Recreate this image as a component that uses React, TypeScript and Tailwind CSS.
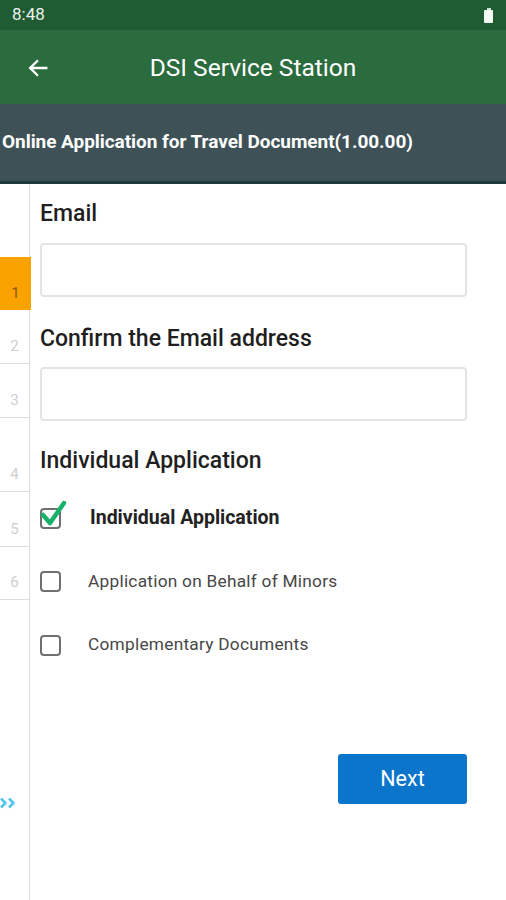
import React, { useState } from "react";

const steps = [
  { n: "1", h: "h-[53px]", active: true },
  { n: "2", h: "h-[54px]", active: false },
  { n: "3", h: "h-[54px]", active: false },
  { n: "4", h: "h-[74px]", active: false },
  { n: "5", h: "h-[55px]", active: false },
  { n: "6", h: "h-[53px]", active: false },
];

const Box = ({ checked }: { checked: boolean }) => (
  <div className="relative w-[21px] h-[21px] shrink-0">
    <div className="absolute inset-0 rounded-[4px] border-2 border-[#6f6f6f]" />
    {checked && (
      <svg
        className="absolute left-[1px] top-[-8px]"
        width="26"
        height="28"
        viewBox="0 0 26 28"
      >
        <path
          d="M2 15 L9 23 L23 3"
          fill="none"
          stroke="#17b26a"
          strokeWidth="4.5"
          strokeLinecap="round"
          strokeLinejoin="round"
        />
      </svg>
    )}
  </div>
);

const App = () => {
  const [email, setEmail] = useState("");
  const [confirm, setConfirm] = useState("");
  const [choice, setChoice] = useState(0);

  const options = [
    "Individual Application",
    "Application on Behalf of Minors",
    "Complementary Documents",
  ];

  return (
    <div className="w-[506px] h-[900px] flex flex-col bg-white overflow-hidden font-['Roboto',sans-serif]">
      {/* status bar */}
      <div className="h-[30px] bg-[#1f5c33] flex items-center justify-between pl-[12px] pr-[13px]">
        <span className="text-[17px] text-[#e9f1eb]">8:48</span>
        <div className="flex flex-col items-center">
          <div className="w-[4px] h-[2px] bg-[#cfe3d4]" />
          <div className="w-[9px] h-[13px] rounded-[1px] bg-[#f4fbf4]" />
        </div>
      </div>

      {/* app bar */}
      <div className="h-[74px] bg-[#2a6c3e] relative flex items-center justify-center pt-[2px]">
        <svg
          className="absolute left-[27px] top-[27px]"
          width="22"
          height="22"
          viewBox="0 0 24 24"
        >
          <path
            d="M21 12H4M11 4.5L3.5 12L11 19.5"
            fill="none"
            stroke="#ffffff"
            strokeWidth="2.6"
            strokeLinecap="square"
          />
        </svg>
        <span className="text-[24.5px] text-white">DSI Service Station</span>
      </div>

      {/* sub header */}
      <div className="h-[80px] bg-[#3d5157] border-b-[3px] border-[#1d3a3c] flex items-center pl-[2px]">
        <span className="text-[19px] font-bold text-white tracking-[-0.05px]">
          Online Application for Travel Document(1.00.00)
        </span>
      </div>

      <div className="flex-1 flex">
        {/* step sidebar */}
        <div className="w-[30px] border-r border-[#dcdcdc] flex flex-col shrink-0">
          <div className="h-[73px]" />
          {steps.map((s) => (
            <div
              key={s.n}
              className={
                s.active
                  ? `${s.h} bg-[#f9a200] w-[31px] flex items-end justify-center pb-[6px]`
                  : `${s.h} border-b border-[#dedede] flex items-end justify-center pb-[6px]`
              }
            >
              <span
                className={
                  s.active ? "text-[15px] text-[#8b5a10]" : "text-[15px] text-[#cfcfcf]"
                }
              >
                {s.n}
              </span>
            </div>
          ))}
          <div className="h-[210px] flex items-end pb-[1px]">
            <svg width="18" height="12" viewBox="0 0 18 12">
              <path
                d="M1 1.5 L5.5 6 L1 10.5 M9 1.5 L13.5 6 L9 10.5"
                fill="none"
                stroke="#52c3ef"
                strokeWidth="2.6"
                strokeLinejoin="round"
              />
            </svg>
          </div>
        </div>

        {/* form */}
        <div className="flex-1 pl-[10px] pr-[39px] pt-[16px] flex flex-col">
          <label className="text-[23px] font-medium text-[#1f1f1f] leading-[28px]">Email</label>
          <input
            value={email}
            onChange={(e) => setEmail(e.target.value)}
            className="mt-[15px] h-[54px] w-full rounded-[4px] border-2 border-[#e4e4e4] px-3 outline-none"
          />
          <label className="mt-[28px] text-[23px] font-medium text-[#1f1f1f] leading-[28px]">
            Confirm the Email address
          </label>
          <input
            value={confirm}
            onChange={(e) => setConfirm(e.target.value)}
            className="mt-[14px] h-[54px] w-full rounded-[4px] border-2 border-[#e4e4e4] px-3 outline-none"
          />
          <div className="mt-[26px] text-[23px] font-medium text-[#1f1f1f] leading-[28px]">
            Individual Application
          </div>

          <div className="mt-[32px] flex flex-col gap-[41.5px]">
            {options.map((o, i) => (
              <button
                key={o}
                onClick={() => setChoice(i)}
                className="flex items-center h-[22px] text-left"
              >
                <Box checked={choice === i} />
                {choice === i ? (
                  <span className="ml-[29px] text-[19.5px] font-bold text-[#222]">{o}</span>
                ) : (
                  <span className="ml-[27px] text-[17.3px] text-[#474747] tracking-[0.25px]">{o}</span>
                )}
              </button>
            ))}
          </div>

          <div className="mt-[98px] flex justify-end">
            <button className="w-[129px] h-[50px] rounded-[3px] bg-[#0b74cb] text-white text-[21.5px]">
              Next
            </button>
          </div>
        </div>
      </div>
    </div>
  );
};

export default App;
